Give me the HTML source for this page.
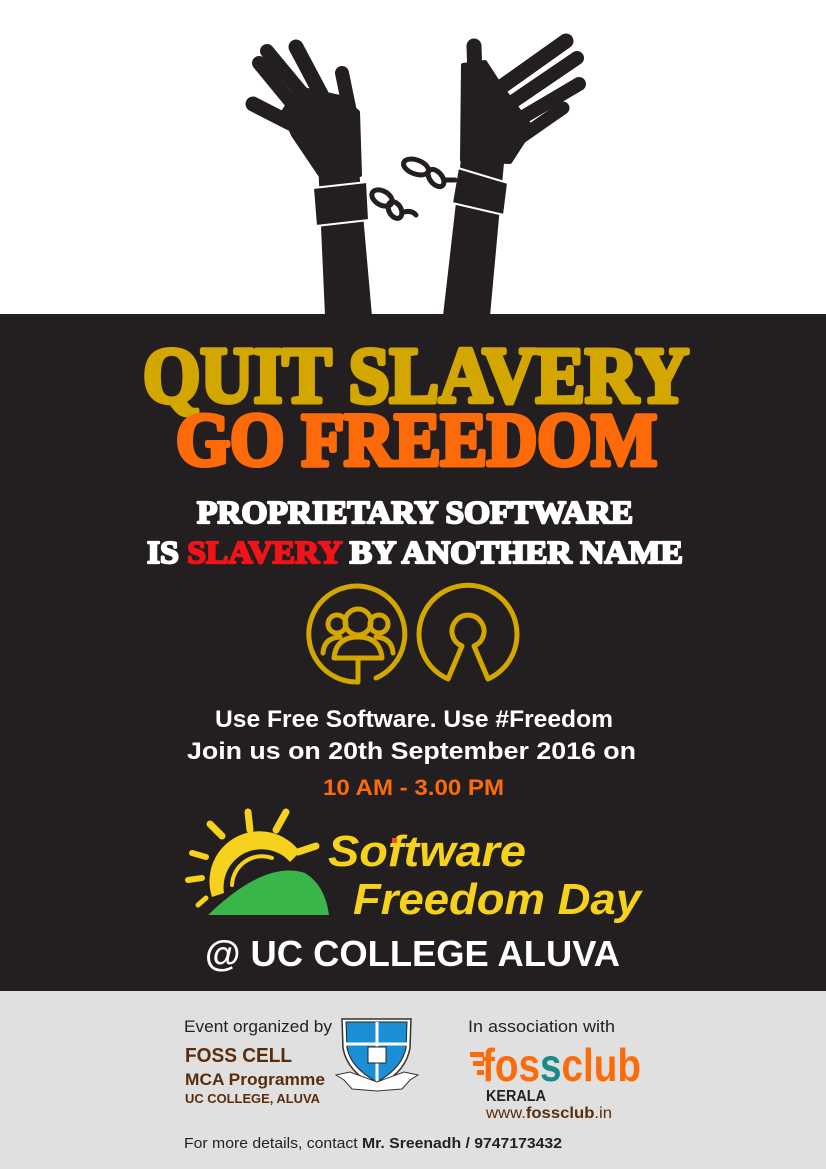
<!DOCTYPE html>
<html><head><meta charset="utf-8"><style>
html,body{margin:0;padding:0;width:826px;height:1169px;overflow:hidden;background:#fff}
svg{display:block}
</style></head><body>
<svg width="826" height="1169" viewBox="0 0 826 1169" xmlns="http://www.w3.org/2000/svg">
<rect x="0" y="0" width="826" height="314" fill="#fff"/>
<rect x="0" y="314" width="826" height="677" fill="#231f20"/>
<rect x="0" y="991" width="826" height="178" fill="#e0e0e0"/>

<!-- Left arm -->
<g fill="#231f20" stroke="#231f20" stroke-linecap="round" stroke-linejoin="round">
<polygon points="318,160 358,158 372,316 325,316" stroke="none"/>
<polygon points="283,112 298,88 340,97 358,112 360,175 320,175 293,135" stroke-width="4"/>
<line x1="253" y1="104" x2="292" y2="124" stroke-width="15"/>
<line x1="259" y1="63" x2="296" y2="108" stroke-width="14"/>
<line x1="267" y1="51" x2="306" y2="98" stroke-width="14"/>
<line x1="296" y1="47" x2="322" y2="96" stroke-width="15"/>
<line x1="342" y1="73" x2="350" y2="112" stroke-width="14"/>
</g>
<polygon points="313,188 367,182 369,220 316,226" fill="#231f20" stroke="#fff" stroke-width="2"/>
<!-- Right arm -->
<g fill="#231f20" stroke="#231f20" stroke-linecap="round" stroke-linejoin="round">
<polygon points="462,150 505,152 490,316 443,316" stroke="none"/>
<polygon points="463,65 485,62 500,85 532,128 510,162 462,160" stroke-width="4"/>
<line x1="474" y1="46" x2="476" y2="110" stroke-width="15"/>
<line x1="497" y1="90" x2="566" y2="41" stroke-width="15"/>
<line x1="508" y1="105" x2="577" y2="58" stroke-width="14"/>
<line x1="518" y1="120" x2="579" y2="84" stroke-width="14"/>
<line x1="520" y1="138" x2="563" y2="108" stroke-width="13"/>
</g>
<polygon points="458,168 508,183 504,215 452,203" fill="#231f20" stroke="#fff" stroke-width="2"/>
<!-- chains -->
<g fill="none" stroke="#231f20" stroke-width="5" stroke-linecap="round">
<ellipse cx="382" cy="198" rx="11" ry="7" transform="rotate(30 382 198)"/>
<ellipse cx="395" cy="210" rx="9" ry="6" transform="rotate(60 395 210)"/>
<path d="M404,212 Q412,210 416,215"/>
<ellipse cx="416" cy="167" rx="13" ry="7" transform="rotate(20 416 167)"/>
<ellipse cx="436" cy="178" rx="10" ry="6" transform="rotate(50 436 178)"/>
<line x1="445" y1="180" x2="455" y2="180"/>
</g>

<!-- Headlines -->
<g font-family="Liberation Serif, serif" font-weight="bold">
<text x="143" y="402" font-size="79" textLength="546" lengthAdjust="spacingAndGlyphs" fill="#d4a600" stroke="#d4a600" stroke-width="5" stroke-linejoin="round">QUIT SLAVERY</text>
<text x="176" y="465" font-size="75" textLength="481" lengthAdjust="spacingAndGlyphs" fill="#fd6a0a" stroke="#fd6a0a" stroke-width="5" stroke-linejoin="round">GO FREEDOM</text>
<text x="197" y="523" font-size="32" textLength="436" lengthAdjust="spacingAndGlyphs" fill="#fff" stroke="#fff" stroke-width="2.2" stroke-linejoin="round">PROPRIETARY  SOFTWARE</text>
<text x="147" y="563" font-size="32" textLength="536" lengthAdjust="spacingAndGlyphs" fill="#fff" stroke="#fff" stroke-width="2.2" stroke-linejoin="round">IS <tspan fill="#f0141a" stroke="#f0141a">SLAVERY</tspan> BY ANOTHER  NAME</text>
</g>

<!-- icons -->
<g fill="none" stroke="#d4a600" stroke-width="5" stroke-linecap="round" stroke-linejoin="round">
<path d="M358,682 A48,48 0 1 1 376,678"/>
<circle cx="358" cy="622" r="13"/>
<circle cx="337" cy="624" r="9"/>
<circle cx="379" cy="624" r="9"/>
<path d="M323,653 Q324,638 340,637"/>
<path d="M393,653 Q392,638 376,637"/>
<path d="M334,658 Q336,637 358,637 Q380,637 382,658 Z"/>
<line x1="358" y1="658" x2="358" y2="680"/>
<path d="M448,679 A49,49 0 1 1 488,679 L474,646 A16,16 0 1 0 462,646 Z"/>
</g>

<!-- middle text -->
<g font-family="Liberation Sans, sans-serif" font-weight="bold">
<text x="215" y="727" font-size="24" textLength="398" lengthAdjust="spacingAndGlyphs" fill="#fff">Use Free Software. Use #Freedom</text>
<text x="187" y="759" font-size="24" textLength="449" lengthAdjust="spacingAndGlyphs" fill="#fff">Join us on 20th September 2016 on</text>
<text x="323" y="795" font-size="22" textLength="181" lengthAdjust="spacingAndGlyphs" fill="#fd6a0a">10 AM - 3.00 PM</text>
</g>

<!-- SFD logo -->
<g fill="#f6d21c" stroke="#f6d21c" stroke-linecap="round">
<path d="M212,897 A50,50 0 0 1 300,852 L290,862 A38,38 0 0 0 224,893 Z" stroke="none"/>
<path d="M232,885 A30,30 0 0 1 272,858" fill="none" stroke-width="4"/>
<line x1="248" y1="812" x2="250" y2="830" stroke-width="7"/>
<line x1="286" y1="812" x2="276" y2="830" stroke-width="7"/>
<line x1="210" y1="824" x2="222" y2="836" stroke-width="7"/>
<line x1="316" y1="846" x2="298" y2="852" stroke-width="7"/>
<line x1="192" y1="853" x2="206" y2="857" stroke-width="6"/>
<line x1="188" y1="880" x2="202" y2="878" stroke-width="6"/>
<line x1="198" y1="905" x2="206" y2="898" stroke-width="5"/>
</g>
<path d="M208,915 Q265,860 305,873 Q325,885 329,915 Z" fill="#3ab54a"/>
<g font-family="Liberation Sans, sans-serif" font-weight="bold" font-style="italic" fill="#f6d21c">
<text x="328" y="866" font-size="44" textLength="198" lengthAdjust="spacingAndGlyphs">Software</text>
<text x="353" y="914" font-size="44" textLength="288" lengthAdjust="spacingAndGlyphs">Freedom Day</text>
</g>
<rect x="392" y="838" width="5" height="5" fill="#f04e23"/>
<text x="205" y="966" font-family="Liberation Sans, sans-serif" font-weight="bold" font-size="36" textLength="415" lengthAdjust="spacingAndGlyphs" fill="#fff">@ UC COLLEGE ALUVA</text>

<!-- bottom -->
<g font-family="Liberation Sans, sans-serif">
<text x="184" y="1032" font-size="17" fill="#222" textLength="148" lengthAdjust="spacingAndGlyphs">Event organized by</text>
<text x="185" y="1062" font-size="20" font-weight="bold" fill="#5a2d0c" textLength="107" lengthAdjust="spacingAndGlyphs">FOSS CELL</text>
<text x="185" y="1085" font-size="17" font-weight="bold" fill="#5a2d0c" textLength="140" lengthAdjust="spacingAndGlyphs">MCA Programme</text>
<text x="185" y="1103" font-size="13" font-weight="bold" fill="#5a2d0c" textLength="135" lengthAdjust="spacingAndGlyphs">UC COLLEGE, ALUVA</text>
<text x="468" y="1032" font-size="17" fill="#222" textLength="147" lengthAdjust="spacingAndGlyphs">In association with</text>
<text x="486" y="1101" font-size="16" font-weight="bold" fill="#222" textLength="60" lengthAdjust="spacingAndGlyphs">KERALA</text>
<text x="486" y="1118" font-size="16" fill="#5a2d0c" textLength="126" lengthAdjust="spacingAndGlyphs">www.<tspan font-weight="bold">fossclub</tspan>.in</text>
<text x="184" y="1148" font-size="15" fill="#222" textLength="378" lengthAdjust="spacingAndGlyphs">For more details, contact <tspan font-weight="bold">Mr. Sreenadh / 9747173432</tspan></text>
<text x="482" y="1081" font-size="46" font-weight="bold" fill="#fd6a0a" textLength="159" lengthAdjust="spacingAndGlyphs">fos<tspan fill="#1b8a8a">s</tspan>club</text>
</g>
<g fill="#fd6a0a"><rect x="470" y="1052" width="14" height="5"/><rect x="473" y="1061" width="11" height="5"/><rect x="477" y="1070" width="7" height="5"/></g>

<!-- crest -->
<path d="M342,1019 L411,1019 L410,1048 Q406,1072 377,1087 Q347,1072 343,1048 Z" fill="#fff" stroke="#333" stroke-width="1.5"/>
<path d="M346,1022 L407,1022 L406,1048 Q402,1068 377,1082 Q351,1068 347,1048 Z" fill="#1b8fd6" stroke="#222" stroke-width="1"/>
<line x1="377" y1="1022" x2="377" y2="1082" stroke="#fff" stroke-width="3"/>
<line x1="346" y1="1044" x2="407" y2="1044" stroke="#fff" stroke-width="3"/>
<rect x="368" y="1047" width="18" height="16" fill="#fff" stroke="#222"/>
<path d="M336,1075 L350,1072 L377,1082 L404,1072 L418,1075 L410,1080 L402,1089 L377,1091 L352,1089 L344,1080 Z" fill="#fff" stroke="#333" stroke-width="1"/>
</svg>
</body></html>
